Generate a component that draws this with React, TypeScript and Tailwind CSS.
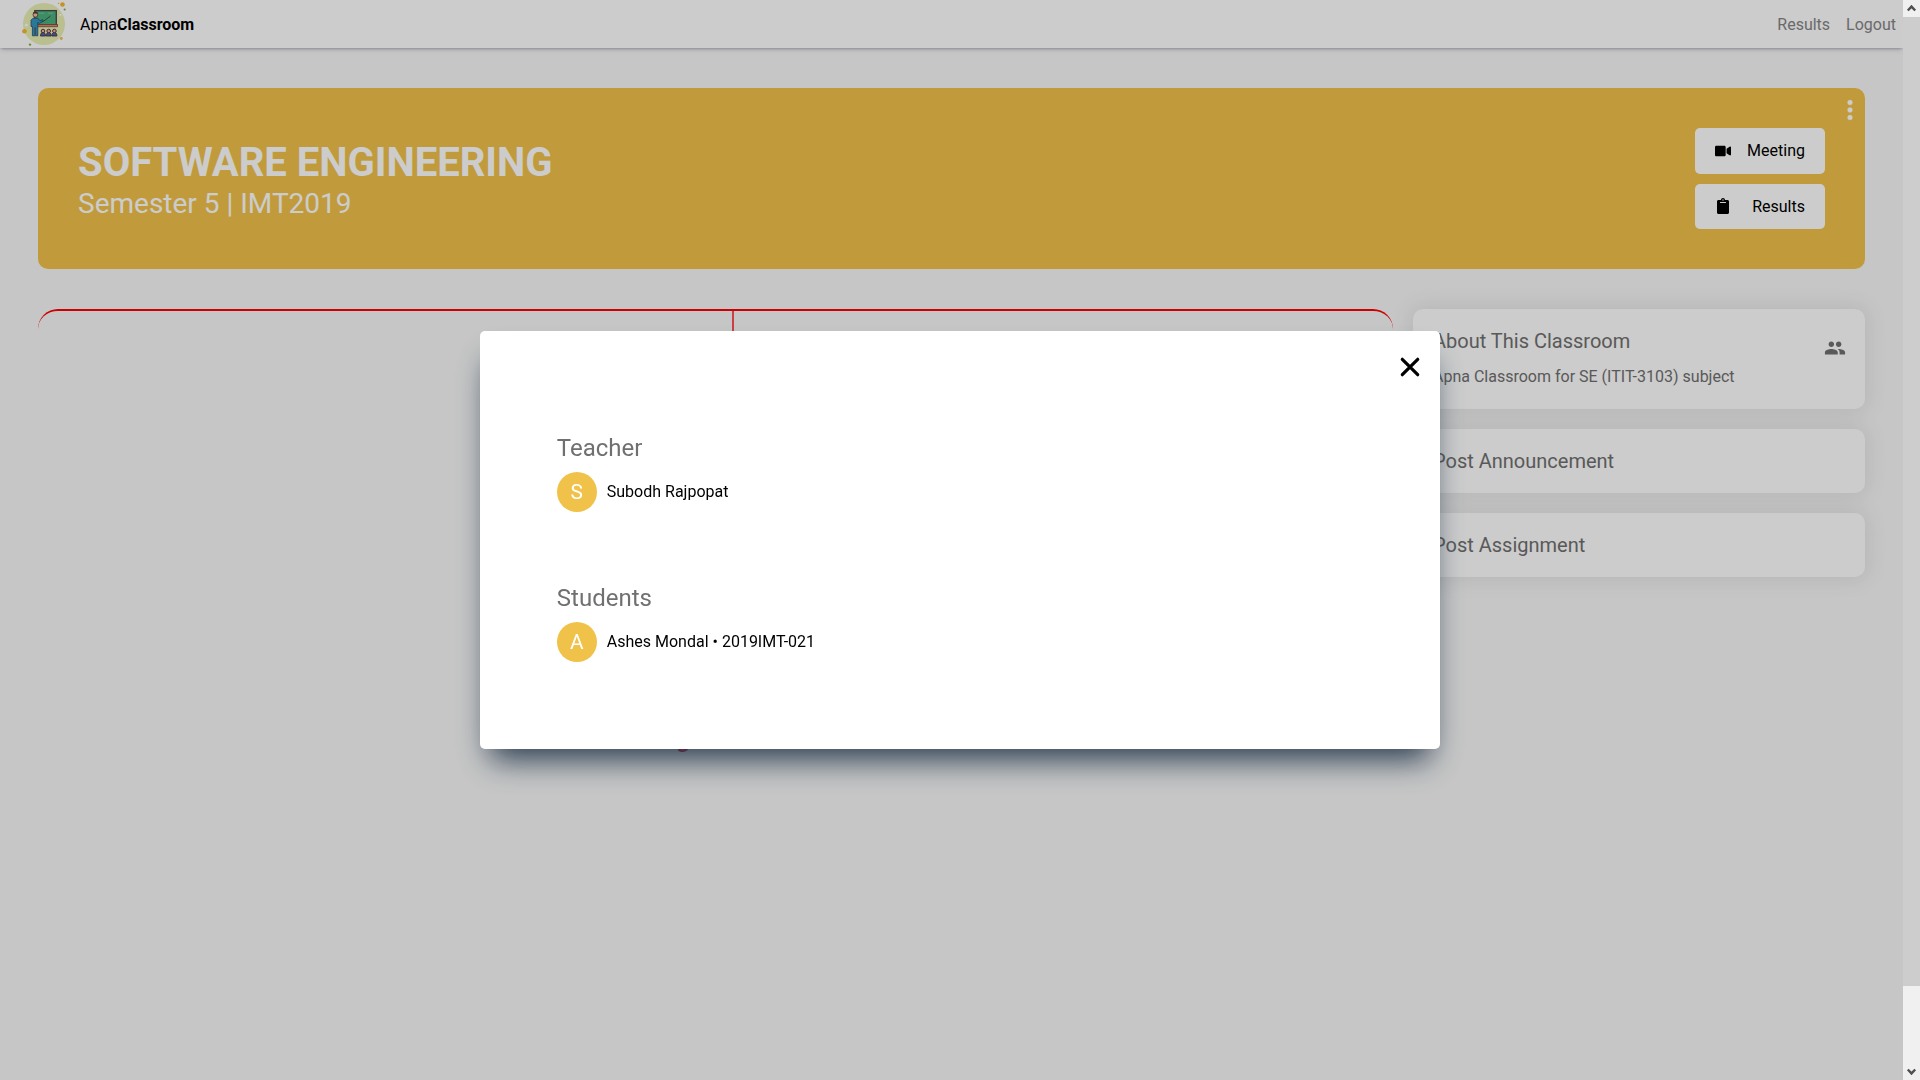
import React from "react";
import { FaVideo, FaClipboard } from "react-icons/fa";
import { BsThreeDotsVertical } from "react-icons/bs";
import { MdPeople } from "react-icons/md";

function Logo() {
  return (
    <svg width="48" height="48" viewBox="0 0 48 48" aria-hidden="true">
      <circle cx="24" cy="24" r="21" fill="#e9efb4" />
      <circle cx="42.5" cy="4.5" r="2.3" fill="#f4b92c" />
      <circle cx="38.6" cy="3.4" r="0.7" fill="#f4b92c" />
      <circle cx="44.7" cy="9.5" r="1.1" fill="#88ae45" />
      <circle cx="4.5" cy="31.2" r="2.3" fill="#f4b92c" />
      <circle cx="10" cy="44.6" r="1.2" fill="#88ae45" />
      <circle cx="41.3" cy="38.5" r="1.4" fill="#f0bd5a" />
      <circle cx="6.3" cy="25" r="1.5" fill="#fff" />
      <circle cx="40.5" cy="15" r="1.1" fill="#fff" />
      <rect x="14.8" y="10.6" width="21.5" height="14.6" fill="#4bb07d" stroke="#4a4650" strokeWidth="1.3" />
      <path d="M18.5 13.2h6M28 13.2h5" stroke="#7fd2a4" strokeWidth="0.8" />
      <rect x="13.2" y="24.4" width="24.4" height="2.4" fill="#d98a6c" stroke="#6b3f38" strokeWidth="0.7" />
      <path d="M22.500 22l8-6" stroke="#39464a" strokeWidth="0.9" />
      <path d="M13 18.200h4.800l2.200 2.600 2.600-1.200 0.600 1.500-4 2.400-1.400-1.200v13.500h-2.200v-8h-0.800v8h-2.400V26.500h-1.400v-6.300z" fill="#3398c0" stroke="#2b4a68" strokeWidth="0.8" />
      <circle cx="15.4" cy="14.8" r="2.4" fill="#f2c29a" stroke="#5a3a38" strokeWidth="0.8" />
      <path d="M12.900 13.600c0-2.800 4.800-2.800 5 0z" fill="#5a3535" />
      {[23, 28.7, 34.4].map((x) => (
        <g key={x}>
          <path d={`M${x - 2.5} 36c0-5 5-5 5 0z`} fill="#4e63a8" stroke="#463345" strokeWidth="0.9" />
          <circle cx={x} cy="31" r="1.8" fill="#f2b79a" stroke="#5a3540" strokeWidth="1" />
        </g>
      ))}
    </svg>
  );
}

function Navbar() {
  return (
    <nav className="flex h-12 shrink-0 items-center bg-white pr-[7px] pl-5 shadow-[0_2px_5px_-1px_rgba(50,50,93,0.25),0_1px_3px_-1px_rgba(0,0,0,0.3)]">
      <Logo />
      <div className="ml-3 text-black">
        Apna<b>Classroom</b>
      </div>
      <div className="ml-auto flex gap-4 text-[#858585]">
        <span>Results</span>
        <span>Logout</span>
      </div>
    </nav>
  );
}

function Banner() {
  return (
    <header className="relative mt-10 flex h-[181px] items-center justify-between rounded-[10px] bg-[#f2c24a] p-10 text-white">
      <div className="pt-px">
        <h1 className="text-[40px] leading-[47px] font-bold">SOFTWARE ENGINEERING</h1>
        <p className="pt-px text-[28px] leading-[33px]">Semester 5 | IMT2019</p>
      </div>
      <div className="flex flex-col gap-[10px] text-black">
        <button className="flex h-[46px] w-[130px] items-center justify-between rounded-[5px] bg-white px-5">
          <FaVideo className="text-base" />
          <span className="pb-px">Meeting</span>
        </button>
        <button className="flex h-[45px] w-[130px] items-center justify-between rounded-[5px] bg-white px-5">
          <FaClipboard className="mb-px text-base" />
          <span>Results</span>
        </button>
      </div>
      <BsThreeDotsVertical className="absolute top-[10px] right-[3px] text-2xl" stroke="currentColor" strokeWidth="0.5" />
    </header>
  );
}

const cardStyle = "rounded-[10px] bg-white p-5 shadow-[0_0_20px_5px_rgba(0,0,0,0.07)]";

function Sidebar() {
  return (
    <aside className="flex w-[452px] flex-col gap-5 text-[#707070]">
      <section className={`${cardStyle} flex h-[100px] items-start justify-between`}>
        <div>
          <h2 className="text-xl leading-6">About This Classroom</h2>
          <p className="mt-[14px] leading-5">Apna Classroom for SE (ITIT-3103) subject</p>
        </div>
        <MdPeople className="mt-2 -mr-px text-[22px]" />
      </section>
      <section className={`${cardStyle} h-16`}>
        <h2 className="text-xl leading-6">Post Announcement</h2>
      </section>
      <section className={`${cardStyle} h-16`}>
        <h2 className="text-xl leading-6">Post Assignment</h2>
      </section>
    </aside>
  );
}

function Board() {
  return (
    <div className="flex h-[435px] w-[1355px] rounded-[20px] border-t-2 border-[#ff0000]">
      <div className="flex w-[694px] items-end justify-end pr-[42px]">
        <span className="-mb-[9px] text-2xl leading-7 font-bold text-[#dc143c]">Nothing</span>
      </div>
      <div className="h-[430px] flex-1 border-l-2 border-[#ff3c46]/90" />
    </div>
  );
}

function Person({ initial, name }: { initial: string; name: string }) {
  return (
    <div className="mt-[10px] flex h-10 items-center gap-[10px] text-black">
      <span className="flex size-10 items-center justify-center rounded-full bg-[#f0c249] text-[20.8px] text-white">{initial}</span>
      <span className="pb-[2px]">{name}</span>
    </div>
  );
}

function PeopleDialog() {
  return (
    <div
      role="dialog"
      className="relative h-[418px] w-[960px] rounded-[5px] bg-white px-[76.8px] pt-[103px] shadow-[0_20px_30px_-10px_rgb(38,57,77)]"
    >
      <svg className="absolute top-[24px] right-[18px]" width="24" height="24" viewBox="0 0 24 24" stroke="#000" strokeWidth="3.2" strokeLinecap="round">
        <path d="M4.300 4.300l15.400 15.400M19.700 4.300L4.300 19.700" />
      </svg>
      <h2 className="text-2xl leading-7 text-[#707070]">Teacher</h2>
      <Person initial="S" name="Subodh Rajpopat" />
      <h2 className="mt-[72px] text-2xl leading-7 text-[#707070]">Students</h2>
      <Person initial="A" name="Ashes Mondal • 2019IMT-021" />
    </div>
  );
}

function Chevron({ d }: { d: string }) {
  return (
    <svg width="17" height="17" viewBox="0 0 17 17" fill="none" stroke="#505050" strokeWidth="2.4">
      <path d={d} />
    </svg>
  );
}

function Scrollbar() {
  return (
    <div className="flex h-full w-[17px] flex-col bg-[#f0f0f0]">
      <Chevron d="M4.800 10.500l3.700-3.900 3.700 3.900" />
      <div className="h-[969px] bg-[#cdcdcd]" />
      <div className="flex-1" />
      <Chevron d="M4.800 6.500l3.700 3.900 3.700-3.900" />
    </div>
  );
}

export default function App() {
  return (
    <div className="flex h-[1080px] w-[1920px] overflow-hidden bg-[#f8f8f8] font-['Roboto',sans-serif] text-base leading-[19px]">
      <div className="flex w-[1903px] flex-col">
        <Navbar />
        <main className="px-[38px]">
          <Banner />
          <div className="mt-10 flex items-start justify-between">
            <Board />
            <Sidebar />
          </div>
        </main>
      </div>
      <Scrollbar />
      <div className="fixed top-0 left-0 h-[1080px] w-[1903px] bg-black/20" />
      <div className="fixed inset-0 flex h-[1080px] w-[1920px] items-center justify-center">
        <PeopleDialog />
      </div>
    </div>
  );
}
